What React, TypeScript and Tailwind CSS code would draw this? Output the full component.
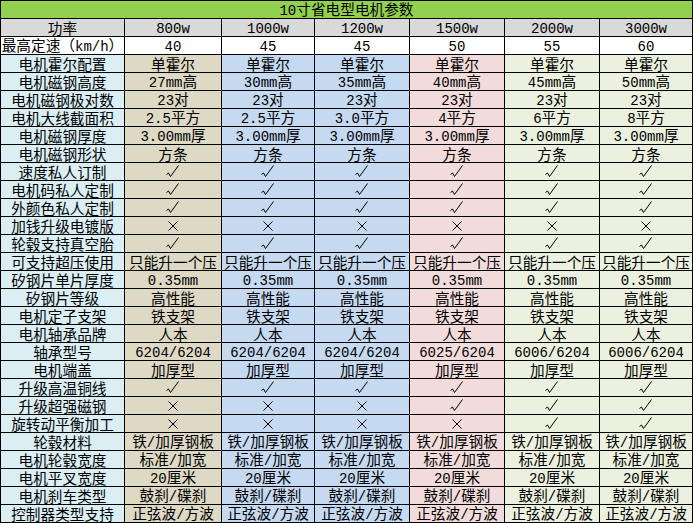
import type { ReactNode } from 'react'

type Cell = string

const powers = ['800w', '1000w', '1200w', '1500w', '2000w', '3000w']
const colBg = ['bg-[#ddd9c4]', 'bg-[#c5d9f1]', 'bg-[#c5d9f1]', 'bg-[#f2dcdb]', 'bg-[#ebf1de]', 'bg-[#ebf1de]']

const Y = '√'
const N = '×'

const rows: [string, Cell[]][] = [
  ['电机霍尔配置', ['单霍尔', '单霍尔', '单霍尔', '单霍尔', '单霍尔', '单霍尔']],
  ['电机磁钢高度', ['27mm高', '30mm高', '35mm高', '40mm高', '45mm高', '50mm高']],
  ['电机磁钢极对数', ['23对', '23对', '23对', '23对', '23对', '23对']],
  ['电机大线截面积', ['2.5平方', '2.5平方', '3.0平方', '4平方', '6平方', '8平方']],
  ['电机磁钢厚度', Array(6).fill('3.00mm厚')],
  ['电机磁钢形状', Array(6).fill('方条')],
  ['速度私人订制', Array(6).fill(Y)],
  ['电机码私人定制', Array(6).fill(Y)],
  ['外颜色私人定制', Array(6).fill(Y)],
  ['加钱升级电镀版', Array(6).fill(N)],
  ['轮毂支持真空胎', Array(6).fill(Y)],
  ['可支持超压使用', Array(6).fill('只能升一个压')],
  ['矽钢片单片厚度', Array(6).fill('0.35mm')],
  ['矽钢片等级', Array(6).fill('高性能')],
  ['电机定子支架', Array(6).fill('铁支架')],
  ['电机轴承品牌', Array(6).fill('人本')],
  ['轴承型号', ['6204/6204', '6204/6204', '6204/6204', '6025/6204', '6006/6204', '6006/6204']],
  ['电机端盖', Array(6).fill('加厚型')],
  ['升级高温铜线', Array(6).fill(Y)],
  ['升级超强磁钢', [N, N, N, Y, Y, Y]],
  ['旋转动平衡加工', [N, N, N, N, Y, Y]],
  ['轮毂材料', Array(6).fill('铁/加厚钢板')],
  ['电机轮毂宽度', Array(6).fill('标准/加宽')],
  ['电机平叉宽度', Array(6).fill('20厘米')],
  ['电机刹车类型', Array(6).fill('鼓刹/碟刹')],
  ['控制器类型支持', Array(6).fill('正弦波/方波')],
]

function Check() {
  return (
    <svg width="14" height="13" viewBox="0 0 14 13" className="block">
      <polyline points="0.5,9.5 2.5,8 4.5,11.5 12.5,0.5" fill="none" stroke="#000" strokeWidth="1" />
    </svg>
  )
}

function Cross() {
  return (
    <svg width="10" height="10" viewBox="0 0 10 10" className="block">
      <path d="M0.5 0.5 L9.5 9.5 M9.5 0.5 L0.5 9.5" stroke="#000" strokeWidth="1" />
    </svg>
  )
}

// ascii runs get a narrow mono font, CJK stays full width
function Text({ value }: { value: string }) {
  const parts = value.split(/([\x20-\x7e]+)/).filter(Boolean)
  return (
    <span className="leading-[17px]">
      {parts.map((p, i) =>
        /^[\x20-\x7e]+$/.test(p) ? (
          <span key={i} className="font-['Liberation_Mono',monospace] text-[14px]">
            {p}
          </span>
        ) : (
          <span key={i}>{p}</span>
        )
      )}
    </span>
  )
}

function Td({ children, className = '' }: { children: ReactNode; className?: string }) {
  return (
    <div className={`h-[17px] flex items-center justify-center whitespace-nowrap leading-[17px] ${className}`}>
      {children}
    </div>
  )
}

function Value({ v }: { v: Cell }) {
  if (v === Y) return <Check />
  if (v === N) return <Cross />
  return <Text value={v} />
}

export default function App() {
  return (
    <div className="w-[693px] h-[523px] bg-white">
      <div className="grid grid-cols-[123px_96px_92px_94px_94px_94px_92px] gap-px bg-black border border-black text-black text-[14.67px] font-['Noto_Sans_CJK_SC',sans-serif]">
        <Td className="col-span-7 bg-[#92d050]">
          <Text value="10寸省电型电机参数" />
        </Td>

        <Td className="bg-[#d9d9d9]">功率</Td>
        {powers.map((p) => (
          <Td key={p} className="bg-[#d9d9d9]">
            <Text value={p} />
          </Td>
        ))}

        <Td className="bg-white">
          <Text value="最高定速（km/h）" />
        </Td>
        {['40', '45', '45', '50', '55', '60'].map((s, i) => (
          <Td key={i} className="bg-white">
            <Text value={s} />
          </Td>
        ))}

        {rows.map(([label, cells]) => (
          <div key={label} className="contents">
            <Td className="bg-[#daeef3]">{label}</Td>
            {cells.map((v, i) => (
              <Td key={i} className={colBg[i]}>
                <Value v={v} />
              </Td>
            ))}
          </div>
        ))}
      </div>
    </div>
  )
}
